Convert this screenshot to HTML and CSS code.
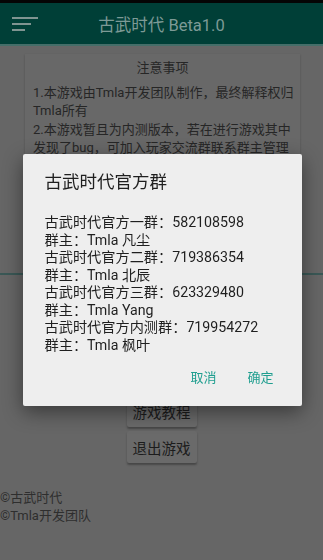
FILE: index.html
```html
<!DOCTYPE html>
<html lang="zh">
<head>
<meta charset="utf-8">
<title>古武时代 Beta1.0</title>
<link rel="stylesheet" href="styles.css">
</head>
<body>
<div class="statusbar"></div>
<header class="toolbar">
  <svg class="menu" width="28" height="16" viewBox="0 0 28 16">
    <rect x="0" y="0" width="26" height="2" fill="#7f9491"/>
    <rect x="0" y="6" width="19" height="2" fill="#7f9491"/>
    <rect x="0" y="12" width="13" height="2" fill="#7f9491"/>
  </svg>
  <div class="title">古武时代 Beta1.0</div>
</header>
<div class="strip"></div>
<main class="main">
  <section class="card">
    <div class="card-title">注意事项</div>
    <p class="para">1.本游戏由Tmla开发团队制作，最终解释权归Tmla所有</p>
    <p class="para">2.本游戏暂且为内测版本，若在进行游戏其中发现了bug，可加入玩家交流群联系群主管理员反馈，感谢您的支持。</p>
  </section>
  <div class="divider"></div>
  <div class="buttons">
    <div class="btn">开始游戏</div>
    <div class="btn">游戏教程</div>
    <div class="btn">退出游戏</div>
  </div>
  <footer class="footer">
    <div>©古武时代</div>
    <div>©Tmla开发团队</div>
  </footer>
</main>
<div class="overlay">
  <div class="dialog">
    <div class="dlg-title">古武时代官方群</div>
    <div class="dlg-body">
      <div>古武时代官方一群：582108598</div>
      <div>群主：Tmla 凡尘</div>
      <div>古武时代官方二群：719386354</div>
      <div>群主：Tmla 北辰</div>
      <div>古武时代官方三群：623329480</div>
      <div>群主：Tmla Yang</div>
      <div>古武时代官方内测群：719954272</div>
      <div>群主：Tmla 枫叶</div>
    </div>
    <div class="dlg-actions">
      <span class="act">取消</span>
      <span class="act">确定</span>
    </div>
  </div>
</div>
</body>
</html>
```
FILE: styles.css
```css
* { box-sizing: border-box; }
html, body { margin: 0; padding: 0; }
body {
  width: 323px;
  height: 560px;
  overflow: hidden;
  background: #666666;
  font-family: Roboto, "Noto Sans CJK SC", sans-serif;
  color: #1e1e1e;
}
.statusbar { height: 3px; background: #050505; }
.toolbar {
  height: 41px;
  background: #003f37;
  display: flex;
  align-items: center;
  position: relative;
}
.menu { margin-left: 12px; margin-top: 3px; }
.title {
  flex: 1;
  text-align: center;
  margin-right: 40px;
  font-size: 16.5px;
  color: #7d9a96;
}
.strip { height: 2px; background: #456e69; }
.main { padding-top: 8px; }
.card {
  margin: 0 23px 0 25px;
  height: 212px;
  background: #686868;
  box-shadow: 0 1px 2px rgba(0,0,0,0.25);
  padding: 5px 3px 5px 8px;
}
.card-title {
  text-align: center;
  font-size: 13px;
  line-height: 18px;
  color: #262626;
  margin-bottom: 7px;
  padding-right: 5px;
}
.para {
  margin: 0 0 2px;
  font-size: 13px;
  line-height: 17.5px;
  color: #262626;
}
.divider {
  margin-top: 7px;
  height: 2px;
  background: #3a5856;
}
.buttons {
  margin-top: 84px;
  display: flex;
  flex-direction: column;
  align-items: center;
  gap: 4px;
}
.btn {
  width: 70px;
  height: 32px;
  background: #6a6a6a;
  border-radius: 2px;
  box-shadow: 0 2px 2px rgba(0,0,0,0.3);
  font-size: 14.5px;
  color: #1c1c1c;
  display: flex;
  align-items: center;
  justify-content: center;
}
.footer {
  margin-top: 26px;
  font-size: 13px;
  line-height: 18px;
  color: #2e2e2e;
}
.overlay {
  position: fixed;
  inset: 0;
  display: flex;
  align-items: center;
  justify-content: center;
}
.dialog {
  width: 279px;
  background: #eeeeee;
  border-radius: 2px;
  box-shadow: 0 6px 20px rgba(0,0,0,0.45);
  padding: 16px 20px 18px 22px;
  margin-left: 1px;
}
.dlg-title {
  font-size: 17.5px;
  line-height: 24px;
  color: #1f1f1f;
}
.dlg-body {
  margin-top: 20px;
  font-size: 14.2px;
  line-height: 17.5px;
  color: #1f1f1f;
}
.dlg-actions {
  margin-top: 14px;
  display: flex;
  justify-content: flex-end;
  gap: 31px;
  padding-right: 8px;
  font-size: 13px;
  line-height: 20px;
  color: #1f9e8f;
}
```
